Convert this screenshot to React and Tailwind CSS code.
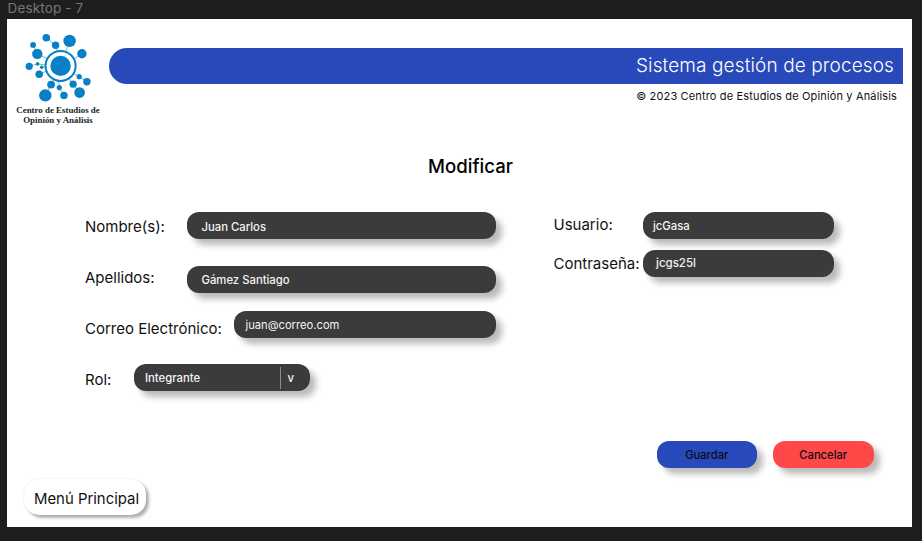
import React from "react";

const nodes = [
  [46.3, 37.8, 3.8], [55.6, 45.3, 3.7], [69.6, 40.9, 6.2], [33.1, 44.9, 2.9],
  [37.3, 53.9, 5.2], [81.9, 53.7, 4.7], [29.2, 66.3, 3.6], [37.6, 63.9, 1.8],
  [41.7, 67.3, 1.8], [39.2, 74.3, 3.8], [79.2, 76.7, 2.6], [86.9, 81.8, 3.7],
  [73.1, 84.2, 3.6], [79.6, 92.6, 5.3], [51.1, 84.6, 3.9], [45.3, 95.4, 6.2],
  [59.3, 87.6, 2.6], [64, 95.4, 3.7],
];

const links = [
  [46.3, 37.8, 55.6, 45.3], [55.6, 45.3, 58, 52], [69.6, 40.9, 65.5, 52],
  [33.1, 44.9, 37.3, 53.9], [37.3, 53.9, 47, 58.5], [81.9, 53.7, 74, 59],
  [29.2, 66.3, 37.6, 63.9], [37.6, 63.9, 46, 65], [41.7, 67.3, 46, 67],
  [39.2, 74.3, 48, 70.5], [73, 73, 79.2, 76.7], [79.2, 76.7, 86.9, 81.8],
  [68, 78, 73.1, 84.2], [73.1, 84.2, 79.6, 92.6], [54, 79, 51.1, 84.6],
  [51.1, 84.6, 45.3, 95.4], [58.5, 80, 59.3, 87.6], [59.3, 87.6, 64, 95.4],
];

function Logo() {
  return (
    <div className="flex w-[94px] shrink-0 flex-col items-center pt-[13px]">
      <svg width="70" height="72" viewBox="23 32 70 72" className="shrink-0">
        <g stroke="#4f9fb4" strokeWidth="0.8">
          {links.map(([x1, y1, x2, y2], i) => (
            <line key={i} x1={x1} y1={y1} x2={x2} y2={y2} />
          ))}
        </g>
        <g fill="#0880c6">
          {nodes.map(([cx, cy, r], i) => (
            <circle key={i} cx={cx} cy={cy} r={r} />
          ))}
        </g>
        <circle cx="60.6" cy="65.9" r="15" fill="#fff" stroke="#0880c6" strokeWidth="2" />
        <circle cx="60.6" cy="65.9" r="10.2" fill="#0880c6" />
      </svg>
      <p className="pt-[0.5px] text-center font-['Liberation_Serif',serif] text-[8.9px] leading-[10.5px] font-bold whitespace-nowrap text-[#222222]">
        Centro de Estudios de
        <br />
        Opinión y Análisis
      </p>
    </div>
  );
}

const label = "shrink-0 text-[15px] leading-[18px] whitespace-nowrap text-[#111111]";
const field =
  "flex h-[27px] shrink-0 items-center rounded-[12px] bg-[#3b3b3b] pt-[2px] whitespace-nowrap text-[#f4f4f4] shadow-[6px_6px_6px_rgba(0,0,0,0.27)]";
const button =
  "h-[27px] w-[100.5px] rounded-[12px] pt-[1px] text-[11.2px] font-medium text-[#0c0c14] shadow-[6px_6px_6px_rgba(0,0,0,0.27)]";

export default function App() {
  return (
    <div className="h-[541px] w-[922px] overflow-hidden bg-[#1e1e1e] pl-[7px] font-['Inter',sans-serif] text-black">
      <div className="h-[19px] pl-[0.5px] text-[13.5px] leading-[17px] tracking-[0.15px] text-[#777777]">
        Desktop - 7
      </div>
      <main className="flex h-[508px] w-[905px] flex-col bg-white">
        <header className="flex h-[113px] pl-[4px]">
          <Logo />
          <div className="ml-[4px] flex w-[794px] flex-col items-end pt-[29px]">
            <div className="flex h-[36px] w-full items-center justify-end rounded-l-full bg-[#2849b9] pr-[9px] text-[19px] font-light tracking-[0.12px] text-white">
              Sistema gestión de procesos
            </div>
            <p className="mt-[5px] pr-[6px] text-[11px] leading-[14px] tracking-[0.15px] text-[#111111]">
              © 2023 Centro de Estudios de Opinión y Análisis
            </p>
          </div>
        </header>
        <h1 className="mt-[21.5px] ml-[22px] text-center text-[18.6px] leading-[24px] font-medium">Modificar</h1>
        <div className="mt-[34.5px] flex pl-[78px]">
          <div className="flex w-[468.5px] flex-col">
            <div className="flex h-[53.5px] items-start">
              <span className={`${label} w-[101.5px] pt-[6px]`}>Nombre(s):</span>
              <div className={`${field} w-[309.5px] pl-[15px] text-[11.3px] font-medium`}>
                <span className="pt-[2px]">Juan Carlos</span>
              </div>
            </div>
            <div className="flex h-[45px] items-start">
              <span className={`${label} w-[101.5px] pt-[3.5px]`}>Apellidos:</span>
              <div className={`${field} w-[309.5px] pl-[15px] text-[11.3px] font-medium`}>Gámez Santiago</div>
            </div>
            <div className="flex h-[53.5px] items-start">
              <span className={`${label} w-[148.5px] pt-[9px]`}>Correo Electrónico:</span>
              <div className={`${field} w-[262.5px] pl-[12px] text-[11.2px]`}>juan@correo.com</div>
            </div>
            <div className="flex items-start">
              <span className={`${label} w-[49px] pt-[6.5px]`}>Rol:</span>
              <div className={`${field} w-[175.5px] pl-[11px] text-[11.3px] font-medium`}>
                <span className="w-[135px]">Integrante</span>
                <span className="mb-[2px] h-[22px] w-px bg-[#8b8b8b]" />
                <span className="ml-[6.5px]">v</span>
              </div>
            </div>
          </div>
          <div className="flex flex-col">
            <div className="flex h-[37.5px] items-start">
              <span className={`${label} w-[89.5px] pt-[4px]`}>Usuario:</span>
              <div className={`${field} w-[191px] pl-[10px] text-[11.3px] font-medium`}>jcGasa</div>
            </div>
            <div className="flex items-start">
              <span className={`${label} w-[89.5px] pt-[5px]`}>Contraseña:</span>
              <div className={`${field} w-[191px] pl-[13px] text-[11.5px] font-medium`}>jcgs25l</div>
            </div>
          </div>
        </div>
        <div className="mt-[50px] flex justify-end gap-[16px] pr-[38.5px]">
          <button className={`${button} bg-[#2849b9]`}>Guardar</button>
          <button className={`${button} bg-[#ff4848]`}>Cancelar</button>
        </div>
        <button className="mt-[11px] ml-[17px] h-[36px] w-[122px] shrink-0 rounded-[15px] bg-white pt-[5px] pl-[3px] text-[14.9px] whitespace-nowrap text-[#111111] shadow-[3px_3px_3px_rgba(0,0,0,0.3),0_0_2px_rgba(0,0,0,0.12)]">
          Menú Principal
        </button>
      </main>
    </div>
  );
}
